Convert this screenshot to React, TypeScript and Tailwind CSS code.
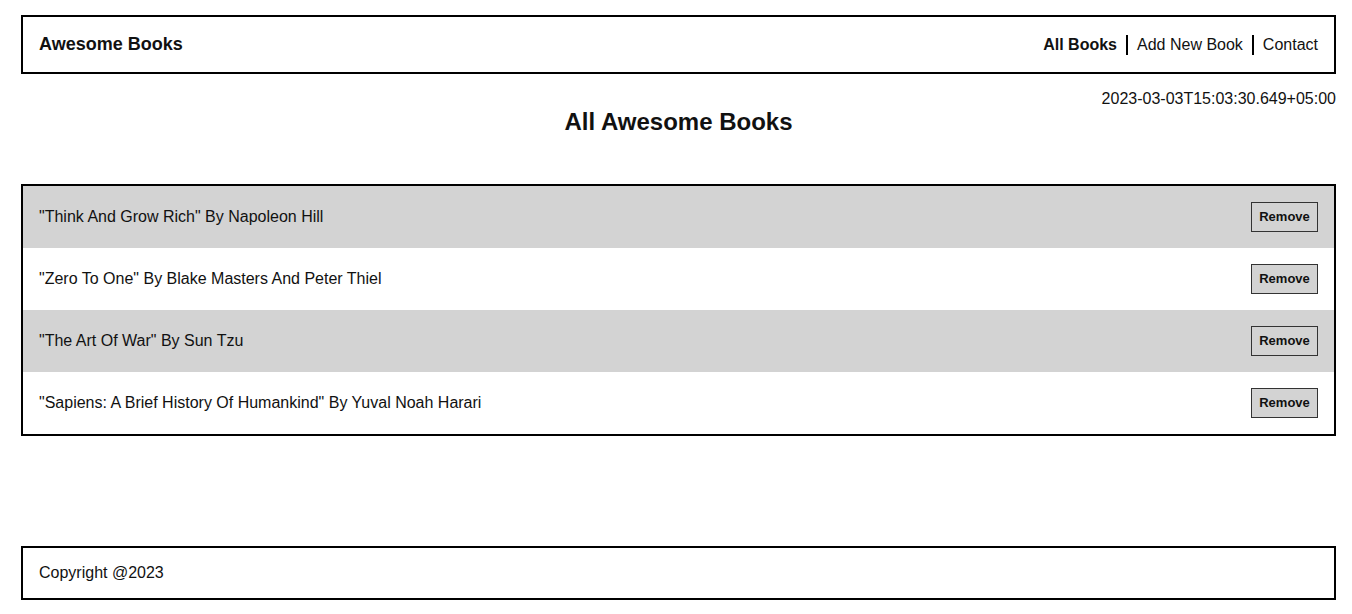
const books = [
  { title: "Think And Grow Rich", author: "Napoleon Hill" },
  { title: "Zero To One", author: "Blake Masters And Peter Thiel" },
  { title: "The Art Of War", author: "Sun Tzu" },
  { title: "Sapiens: A Brief History Of Humankind", author: "Yuval Noah Harari" },
];

export default function App() {
  return (
    <div className="min-h-[614px] bg-white pl-[21px] pr-[16px] pt-[15px] text-[#111] font-['Liberation_Sans',Arial,sans-serif]">
      <header className="flex h-[59px] items-center justify-between border-2 border-black px-4">
        <span className="text-[18px] font-bold">Awesome Books</span>
        <nav className="flex items-center text-[16px]">
          <a className="font-bold pr-[9px]">All Books</a>
          <a className="border-l-2 border-black px-[9px] leading-[20px]">Add New Book</a>
          <a className="border-l-2 border-black pl-[9px] leading-[20px]">Contact</a>
        </nav>
      </header>

      <div className="mt-4 text-right text-[16px] leading-[18px]">2023-03-03T15:03:30.649+05:00</div>
      <h1 className="text-center text-[24px] font-bold leading-[28px]">All Awesome Books</h1>

      <ul className="mt-[48px] border-2 border-black">
        {books.map((book, i) => (
          <li
            key={book.title}
            className={`flex items-center justify-between px-4 py-4 text-[16px] ${i % 2 === 0 ? "bg-[#d3d3d3]" : "bg-white"}`}
          >
            <span>"{book.title}" By {book.author}</span>
            <button className="h-[30px] w-[67px] border border-[#333] bg-[#d3d3d3] text-[13px] font-bold">
              Remove
            </button>
          </li>
        ))}
      </ul>

      <footer className="mt-[110px] flex h-[54px] items-center border-2 border-black px-4 text-[16px]">
        Copyright @2023
      </footer>
    </div>
  );
}
